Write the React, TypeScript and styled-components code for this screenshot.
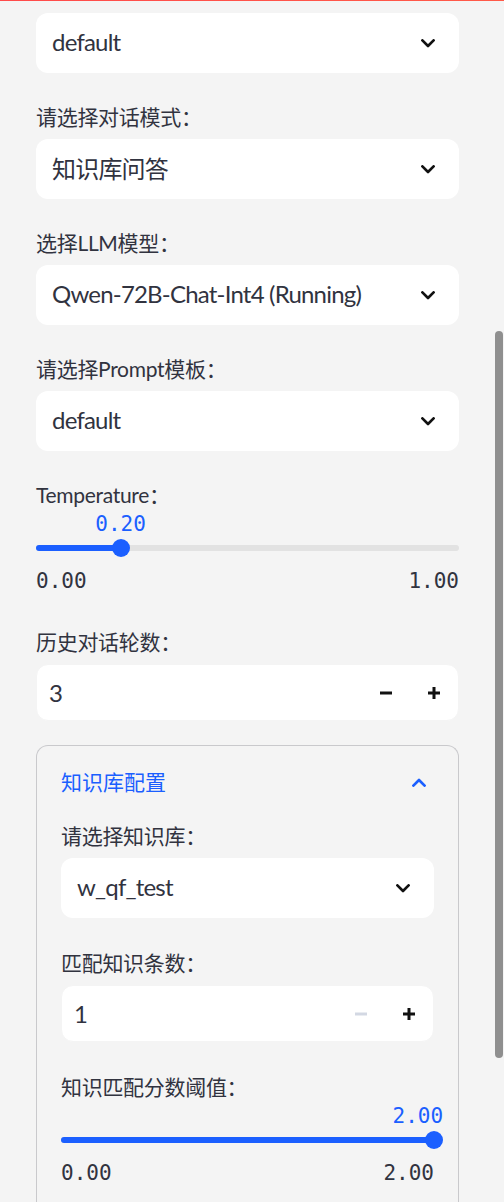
import React from "react";
import styled, { createGlobalStyle } from "styled-components";

//  styled-components
// ----------------------------------------------
const GlobalStyle = createGlobalStyle`
  html, body {
    margin: 0;
    padding: 0;
    background: #f4f4f4;
  }
  body {
    height: 1202px;
    overflow: hidden;
    font-family: Lato, "Noto Sans CJK SC", sans-serif;
    color: #31333f;
  }
`;

const Sidebar = styled.div`
  position: relative;
  width: 504px;
  height: 1202px;
  overflow: hidden;
`;

const Decoration = styled.div`
  height: 1px;
  background: linear-gradient(90deg, #ff4b4b, #ff5a48);
`;

const Content = styled.div`
  width: 423px;
  margin-left: 36px;
  padding-top: 12px;
  display: flex;
  flex-direction: column;
  gap: 24px;
`;

const ScrollThumb = styled.div`
  position: absolute;
  top: 331px;
  right: 1px;
  width: 8px;
  height: 727px;
  border-radius: 4px;
  background: #8f8f8f;
`;

const Widget = styled.div`
  display: flex;
  flex-direction: column;
`;

const Label = styled.div`
  height: 36px;
  padding-top: 2px;
  margin-bottom: 4px;
  font-size: 21px;
  line-height: 36px;
  letter-spacing: -0.3px;
  white-space: nowrap;
`;

const SelectBox = styled.div`
  height: 60px;
  box-sizing: border-box;
  display: flex;
  align-items: center;
  justify-content: space-between;
  padding: 0 24px 0 16px;
  border-radius: 12px;
  background: #ffffff;
  font-size: 24px;
  letter-spacing: -0.8px;
  white-space: nowrap;
`;

const SelectValue = styled.span`
  padding-bottom: 3px;
`;

const NumberBox = styled.div`
  height: 57px;
  box-sizing: border-box;
  display: flex;
  align-items: center;
  border: 1px solid #f4f4f4;
  border-radius: 12px;
  background: #ffffff;
  font-size: 24px;
`;

const NumberValue = styled.div`
  flex: 1;
  padding-left: 12px;
`;

const StepButton = styled.div<{ $disabled?: boolean }>`
  width: 48px;
  height: 100%;
  display: flex;
  align-items: center;
  justify-content: center;
  color: ${(p) => (p.$disabled ? "#d3d8e3" : "#111111")};
`;

const SliderBox = styled.div`
  display: flex;
  flex-direction: column;
  padding-top: 28px;
  padding-bottom: 5px;
`;

const Track = styled.div`
  position: relative;
  height: 6px;
  border-radius: 3px;
  background: #e2e2e2;
`;

const Fill = styled.div`
  height: 100%;
  border-radius: 3px;
  background: #1b5fff;
`;

const Thumb = styled.div`
  position: absolute;
  top: 50%;
  width: 18px;
  height: 18px;
  border-radius: 50%;
  background: #1b5fff;
  transform: translate(-50%, -50%);
`;

const ThumbValue = styled.div<{ $shift: number }>`
  position: absolute;
  bottom: 16px;
  font-family: "DejaVu Sans Mono", "Liberation Mono", monospace;
  font-size: 21px;
  line-height: 21px;
  color: #1b5fff;
  white-space: nowrap;
  transform: translateX(${(p) => p.$shift}%);
`;

const Ticks = styled.div`
  display: flex;
  justify-content: space-between;
  margin-top: 18px;
  font-family: "DejaVu Sans Mono", "Liberation Mono", monospace;
  font-size: 21px;
  line-height: 24px;
`;

const Expander = styled.div`
  border: 1px solid #c9c9cc;
  border-bottom: none;
  border-radius: 12px 12px 0 0;
  padding-bottom: 40px;
`;

const ExpanderHeader = styled.div`
  display: flex;
  align-items: center;
  justify-content: space-between;
  padding: 18px 32px 16px 24px;
  font-size: 21px;
  line-height: 36px;
  color: #1b5fff;
`;

const ExpanderBody = styled.div`
  display: flex;
  flex-direction: column;
  gap: 25px;
  padding: 0 24px;
`;
// ----------------------------------------------

const Chevron = ({ up, color = "#111111" }: { up?: boolean; color?: string }) => (
  <svg width="14" height="9" viewBox="0 0 14 9" style={{ transform: up ? "rotate(180deg)" : undefined }}>
    <path d="M1.4 1.4 L7 7 L12.6 1.4" fill="none" stroke={color} strokeWidth="2.7" strokeLinecap="round" strokeLinejoin="round" />
  </svg>
);

const Plus = () => (
  <svg width="12" height="12" viewBox="0 0 12 12">
    <path d="M6 0 V12 M0 6 H12" stroke="currentColor" strokeWidth="3" />
  </svg>
);

const Minus = () => (
  <svg width="12" height="12" viewBox="0 0 12 12">
    <path d="M0 6 H12" stroke="currentColor" strokeWidth="3" />
  </svg>
);

const Select = ({ label, value }: { label?: string; value: string }) => (
  <Widget>
    {label && <Label>{label}</Label>}
    <SelectBox>
      <SelectValue>{value}</SelectValue>
      <Chevron />
    </SelectBox>
  </Widget>
);

const NumberInput = ({ label, value, minDisabled }: { label: string; value: number; minDisabled?: boolean }) => (
  <Widget>
    <Label>{label}</Label>
    <NumberBox>
      <NumberValue>{value}</NumberValue>
      <StepButton $disabled={minDisabled}>
        <Minus />
      </StepButton>
      <StepButton>
        <Plus />
      </StepButton>
    </NumberBox>
  </Widget>
);

const Slider = ({ label, value, min, max }: { label: string; value: number; min: number; max: number }) => {
  const pct = ((value - min) / (max - min)) * 100;
  return (
    <Widget>
      <Label>{label}</Label>
      <SliderBox>
        <Track>
          <Fill style={{ width: `${pct}%` }} />
          <Thumb style={{ left: `${pct}%` }} />
          <ThumbValue $shift={pct > 90 ? -82 : -50} style={{ left: `${pct}%` }}>
            {value.toFixed(2)}
          </ThumbValue>
        </Track>
        <Ticks>
          <span>{min.toFixed(2)}</span>
          <span>{max.toFixed(2)}</span>
        </Ticks>
      </SliderBox>
    </Widget>
  );
};

const App = () => {
  return (
    <Sidebar>
      <GlobalStyle />
      <Decoration />
      <Content>
        <Select value="default" />
        <Select label="请选择对话模式：" value="知识库问答" />
        <Select label="选择LLM模型：" value="Qwen-72B-Chat-Int4 (Running)" />
        <Select label="请选择Prompt模板：" value="default" />
        <Slider label="Temperature：" value={0.2} min={0} max={1} />
        <NumberInput label="历史对话轮数：" value={3} />
        <Expander>
          <ExpanderHeader>
            <span>知识库配置</span>
            <Chevron up color="#1b5fff" />
          </ExpanderHeader>
          <ExpanderBody>
            <Select label="请选择知识库：" value="w_qf_test" />
            <NumberInput label="匹配知识条数：" value={1} minDisabled />
            <Slider label="知识匹配分数阈值：" value={2} min={0} max={2} />
          </ExpanderBody>
        </Expander>
      </Content>
      <ScrollThumb />
    </Sidebar>
  );
};

export default App;
